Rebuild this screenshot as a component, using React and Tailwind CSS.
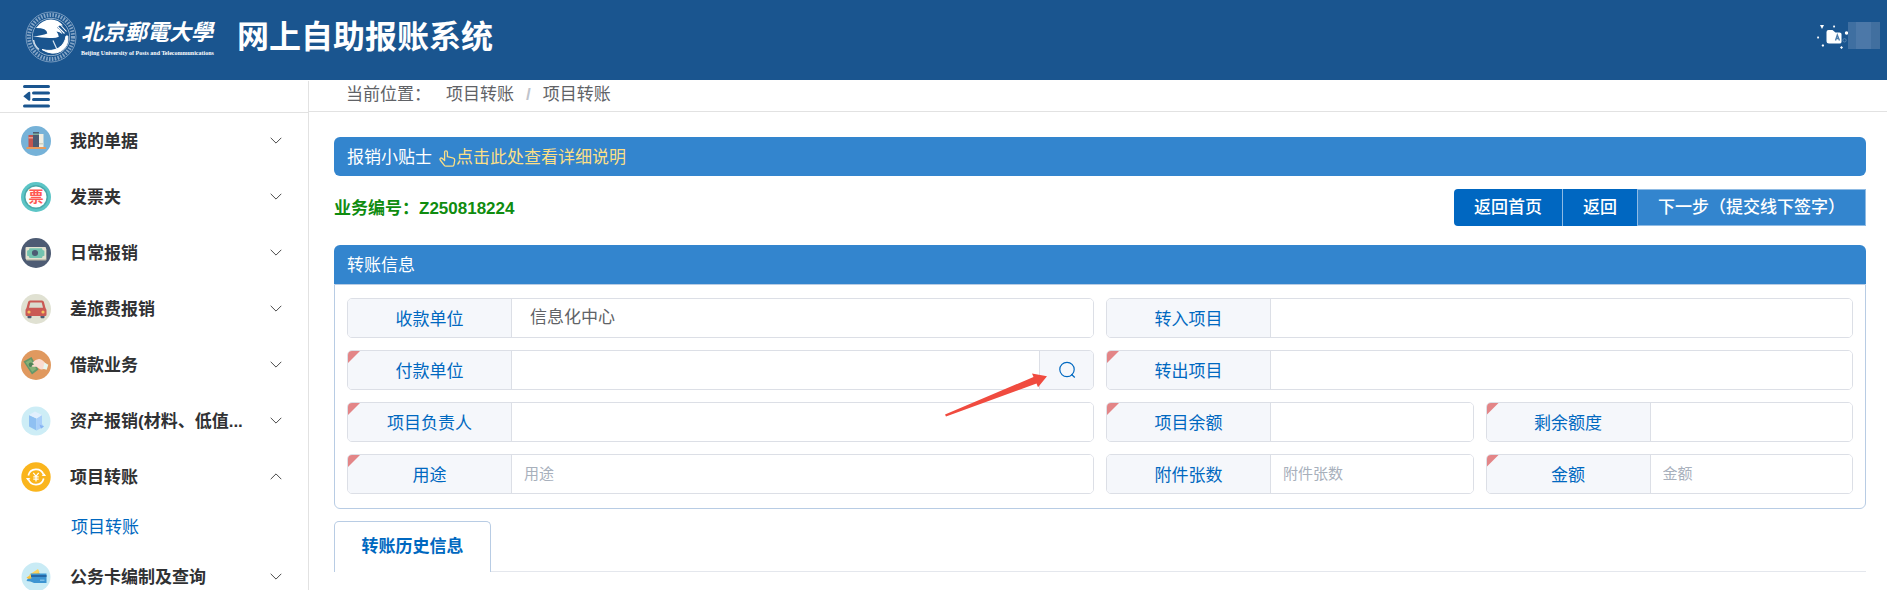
import React from "react";

const Svg = ({ children }) => (
  <svg viewBox="0 0 30 30" className="size-[30px] shrink-0" aria-hidden="true">
    {children}
  </svg>
);

const icons = {
  books: (
    <Svg>
      <circle cx="15" cy="15" r="15" fill="#76b2d8" />
      <rect x="7.5" y="9" width="5" height="12.5" fill="#c3554e" />
      <rect x="7.5" y="11" width="5" height="1.5" fill="#e9a08f" />
      <rect x="17.5" y="8" width="5" height="13.5" fill="#f0eee2" />
      <rect x="17.5" y="17" width="5" height="1.5" fill="#cfd0bf" />
      <rect x="12" y="6" width="6" height="15.5" fill="#4c5b72" />
      <rect x="12" y="7.5" width="6" height="1.5" fill="#7fae9c" />
      <rect x="5.5" y="21" width="19.5" height="2" rx="0.6" fill="#e79a5b" />
    </Svg>
  ),
  ticket: (
    <Svg>
      <circle cx="15" cy="15" r="15" fill="#5cc5c6" />
      <circle cx="15" cy="15" r="12" fill="#4aa9aa" />
      <circle cx="15" cy="15" r="10.5" fill="#fff" />
      <text x="15" y="20.3" textAnchor="middle" fontSize="15" fontWeight="700" fill="#ff5a52">
        票
      </text>
    </Svg>
  ),
  cash: (
    <Svg>
      <circle cx="15" cy="15" r="15" fill="#4d5b73" />
      <rect x="5" y="10.5" width="20.5" height="12" rx="1" fill="#b9b8a6" />
      <rect x="4.5" y="9" width="20.5" height="12.3" rx="1" fill="#e2e1cf" />
      <path d="M8.5 10.3h12.5a2.4 2.4 0 0 0 2.4 2.4v5a2.4 2.4 0 0 0-2.4 2.4H8.5a2.4 2.4 0 0 0-2.4-2.4v-5a2.4 2.4 0 0 0 2.4-2.4z" fill="#74c3af" />
      <circle cx="14" cy="15" r="3.1" fill="#4d5b73" />
    </Svg>
  ),
  car: (
    <Svg>
      <circle cx="15" cy="15" r="15" fill="#e0e1d2" />
      <rect x="6.5" y="20" width="4" height="4.3" rx="1" fill="#4d5b73" />
      <rect x="19.5" y="20" width="4" height="4.3" rx="1" fill="#4d5b73" />
      <path d="M9 6.5h12q1.5 0 1.9 1.5l1.7 6.3q.9.8.9 2.2v4.2q0 1.3-1.3 1.3H5.8q-1.3 0-1.3-1.3v-4.2q0-1.4.9-2.2L7.1 8Q7.5 6.5 9 6.5z" fill="#ca5a55" />
      <path d="M9.3 8.5h11.4l1.3 5.3H8z" fill="#d9dccf" />
      <circle cx="8" cy="18" r="1.6" fill="#f6c35f" />
      <circle cx="22" cy="18" r="1.6" fill="#f6c35f" />
    </Svg>
  ),
  loan: (
    <Svg>
      <circle cx="15" cy="15" r="15" fill="#e0995f" />
      <path d="M2.5 11.5l8-4.5 7 12.500-6.500 5z" fill="#64976a" />
      <path d="M4.7 12.2l5.200-2.900 5.300 9.600-4 3z" fill="#86b277" />
      <circle cx="9.8" cy="14.8" r="2.2" fill="#4f8058" />
      <path d="M11.5 12.5q3.500-4 7-3.500 3.300.5 6 4.500l-1.500 5.500q-3 1-5-.6l-2.500-1.700q-3 .2-5-.2.200-1.400 2.700-1.700z" fill="#fadcd0" />
      <path d="M23.5 12.5l3.800 2.300-1.600 5-3.700-1z" fill="#e9f7ee" />
    </Svg>
  ),
  box: (
    <Svg>
      <circle cx="15" cy="15" r="14.5" fill="#cdedf6" />
      <path d="M8 9l7.500 3.500v12L8 20.500z" fill="#8fc0f2" />
      <path d="M15.500 12.500L21 9v9l2 2.500-7.500 4z" fill="#a9cffa" />
      <path d="M8 9l6-3.500L21 9l-5.500 3.500z" fill="#e2effd" />
      <path d="M18.500 18.500l4.500 2-3 2.300z" fill="#86b4f2" />
    </Svg>
  ),
  transfer: (
    <Svg>
      <circle cx="15" cy="15" r="14.7" fill="#fab51d" />
      <g fill="none" stroke="#fff" strokeWidth="1.7">
        <path d="M7.300 13.500a8 8 0 0 1 15.300-.7" />
        <path d="M22.700 16.500a8 8 0 0 1-15.300.7" />
        <path d="M12.300 10.800l2.700 3.500 2.700-3.500M15 14.300v5.200M12.300 14.800h5.400M12.300 17.200h5.400" strokeWidth="1.3" />
      </g>
      <path d="M20.500 14h4.500l-1.500-2.500zM9.500 16H5l1.500 2.500z" fill="#fff" />
    </Svg>
  ),
  card: (
    <Svg>
      <circle cx="15" cy="15" r="14.5" fill="#c9ebf5" />
      <path d="M5.500 15.500l11-7 3 4-9.500 7z" fill="#f6c141" />
      <path d="M8 13l9-6 1.500 3-9 5z" fill="#fbd35f" />
      <path d="M9.500 11.500H25.500v9.500H13l-3.500-1.500-4-.5 1-2 4-.5z" fill="#3d95d2" />
      <path d="M10 13h15.500v2H10z" fill="#2567a5" />
      <path d="M19 18.200h4.500" stroke="#9ad0f0" strokeWidth="1" />
    </Svg>
  ),
};

const menu = [
  { icon: "books", label: "我的单据" },
  { icon: "ticket", label: "发票夹" },
  { icon: "cash", label: "日常报销" },
  { icon: "car", label: "差旅费报销" },
  { icon: "loan", label: "借款业务" },
  { icon: "box", label: "资产报销(材料、低值..." },
  { icon: "transfer", label: "项目转账", children: ["项目转账"] },
  { icon: "card", label: "公务卡编制及查询" },
];

const Chevron = ({ open }) => (
  <svg viewBox="0 0 12 8" className="h-2 w-3 shrink-0" fill="none" stroke="#4a4a4a" strokeWidth="1" aria-hidden="true">
    <path d={open ? "M.7 6.200L6 .9l5.300 5.300" : "M.7.800L6 6.100l5.300-5.300"} />
  </svg>
);

function Seal() {
  return (
    <svg viewBox="0 0 52 52" className="size-[52px] shrink-0" aria-hidden="true">
      <circle cx="26" cy="26" r="25" fill="none" stroke="#8dabca" strokeWidth=".8" />
      <circle cx="26" cy="26" r="22" fill="none" stroke="#84a5c7" strokeWidth="4" strokeDasharray="1.600 1.300" />
      <circle cx="26" cy="26" r="18.7" fill="#1a558f" stroke="#bdd0e3" strokeWidth=".7" />
      <path d="M11 17Q17 8.500 26 8.500q7.500 0 12 6-3.500-.8-6 2.300 3.300 1.500 5.500 6.500-3-2.500-6-2.800 2 2.500 2.300 5.200-3.300 1.700-8 1.300-8 .2-18-1.800 9-.5 14.500-2.800Q22 17 11 17z" fill="#fff" />
      <path d="M32 15l7.500 7.500M35 13.500l6.500 7" stroke="#fff" strokeWidth="1.100" />
      <path d="M42.800 25q1.200 10-6.500 15-8.800 5-19.300-1.500Q27 41 33.500 37q6.500-4 7.500-12z" fill="#fff" stroke="#fff" strokeWidth="1" />
      <path d="M28 29.500l4 9" stroke="#dce7f1" strokeWidth="1.200" />
      <path d="M8.500 29q1 6 5.500 9.500" fill="none" stroke="#d3e0ed" strokeWidth="1.500" />
    </svg>
  );
}

function Header() {
  return (
    <header className="flex h-20 items-start justify-between bg-[#1a558f] pr-[7px] pl-[25px] text-white">
      <div className="flex items-center pt-[11px]">
        <Seal />
        <div className="ml-1 w-[134px] pt-px whitespace-nowrap">
          <div className="text-[22px] leading-[30px] font-bold italic">北京郵電大學</div>
          <div className="font-['Liberation_Serif',serif] text-[6px] leading-[10px] font-bold">
            Beijing University of Posts and Telecommunications
          </div>
        </div>
        <h1 className="ml-[22px] text-[32px] leading-[52px] font-bold">网上自助报账系统</h1>
      </div>
      <div className="flex pt-[22px]">
        <svg viewBox="0 0 32 27" className="h-[27px] w-8" fill="#fff" aria-hidden="true">
          <path d="M4 3h4L6 7zM17 4.500l1-1.500 1.200 1.500L18 6zM1 15.500l1-1.500 1.200 1.500L2 17zM5.500 23.500L7 22l1.200 1.500L7 25zM24 25.500l1.500-1.500 1.500 1.500-1.500 1.500z" />
          <path d="M12.500 8h4l3 2.500h4q2 0 2 1.500v8q0 1.500-2 1.500H13q-2.500 0-2.500-2.500v-9Q10.500 8 12.500 8z" />
          <circle cx="30.5" cy="11" r="1.700" />
          <path d="M19.500 18.500l1.800-5.500 2.200 5.500M20.300 16.500h2.500" fill="none" stroke="#4b7cab" strokeWidth="1.300" />
          <circle cx="28.5" cy="18.300" r="1.700" fill="none" stroke="#5f8bb6" strokeWidth=".8" />
        </svg>
        <div className="grid h-[27px] w-8 grid-cols-[8px_15px_9px]">
          <span className="bg-[#3f6fa1]" />
          <span className="bg-[#4c78a8]" />
          <span className="bg-[#416f9f]" />
        </div>
      </div>
    </header>
  );
}

function Sidebar() {
  return (
    <aside className="mt-px w-[309px] shrink-0 border-r border-[#e2e2e2]">
      <div className="flex h-8 items-start border-b border-[#e2e2e2] pt-[3px] pl-[23px]">
        <button type="button" aria-label="收起菜单">
          <svg viewBox="0 0 27 24" className="h-6 w-[27px]" aria-hidden="true">
            <g stroke="#1a558f" strokeWidth="3" strokeLinecap="round">
              <path d="M1.500 2.500h24M10.500 9h15M10.500 15.500h15M1.500 22h24" />
            </g>
            <path d="M.3 12.200L5.500 8q1.800-.8 1.800 1v6.500q0 1.700-1.800.9z" fill="#1a558f" />
          </svg>
        </button>
      </div>
      <nav>
        {menu.map((m) => (
          <div key={m.icon}>
            <button type="button" className="flex h-14 w-full items-center pr-[26px] pl-[21px] text-left">
              {icons[m.icon]}
              <span className="ml-[19px] flex-1 pt-[2px] text-[17px] leading-6 font-bold whitespace-nowrap text-[#303133]">
                {m.label}
              </span>
              <Chevron open={!!m.children} />
            </button>
            {m.children?.map((c) => (
              <a key={c} href="#transfer" className="flex h-11 items-center pt-[2px] pl-[71px] text-[17px] leading-6 text-[#0068c0]">
                {c}
              </a>
            ))}
          </div>
        ))}
      </nav>
    </aside>
  );
}

function Field({ id, label, required, placeholder, value, wide, search }) {
  return (
    <div className={(wide ? "col-span-2" : "col-span-1") + " relative flex h-10 rounded-[5px] border border-[#dcdfe6]"}>
      {required && (
        <span className="absolute top-0 left-0 size-3 rounded-tl-[4px] bg-[#e38587] [clip-path:polygon(0_0,100%_0,0_100%)]" />
      )}
      <label
        htmlFor={id}
        className="flex w-[164px] shrink-0 items-center justify-center rounded-l-[4px] border-r border-[#dcdfe6] bg-[#f5f7fb] pt-[3px] text-[17px] leading-6 text-[#0068c0]"
      >
        {label}
      </label>
      <input
        id={id}
        type="text"
        defaultValue={value}
        placeholder={placeholder}
        className={
          (value ? "px-[18px] text-[17px]" : "px-3 text-[15px]") +
          " min-w-0 flex-1 rounded-r-[4px] bg-white text-[#606266] outline-none placeholder:text-[#a8b0bc]"
        }
      />
      {search && (
        <>
          <button
            type="button"
            aria-label="查询"
            className="flex w-[54px] shrink-0 items-center justify-center rounded-r-[4px] border-l border-[#dcdfe6] bg-[#f5f7fb]"
          >
            <svg viewBox="0 0 18 18" className="size-[18px]" fill="none" stroke="#0068c0" strokeWidth="1.200" aria-hidden="true">
              <circle cx="9" cy="8.500" r="7.200" />
              <path d="M13.300 13.300l3.500 3.200" />
            </svg>
          </button>
          <svg viewBox="0 0 104 46" className="absolute top-5 right-[45px] z-10 h-[46px] w-[104px]" fill="#f04b3f" aria-hidden="true">
            <path d="M1 43.500L89.500 6 88 2.500l15 2.700L94 16.300 92.500 12.500 2 45.500z" />
          </svg>
        </>
      )}
    </div>
  );
}

function Main() {
  return (
    <main className="min-w-0 flex-1">
      <div className="flex h-8 items-center border-b border-[#e2e2e2] pb-px pl-[37px] text-[17px] leading-6 text-[#606266]">
        <span className="w-[100px]">当前位置：</span>
        <span>项目转账</span>
        <span className="mx-3 font-bold text-[#c0c4cc]">/</span>
        <span>项目转账</span>
      </div>
      <div className="pt-[25px] pr-[21px] pl-[25px]">
        <div className="flex h-[39px] items-center gap-[7px] rounded-md bg-[#3385ce] px-[13px] pt-[3px] text-[17px] leading-6 text-white">
          <span>报销小贴士</span>
          <a href="#tips" className="flex items-center text-[#fbdf86]">
            <svg viewBox="0 0 17 17" className="size-[17px]" fill="none" stroke="#fbdf86" strokeWidth="1.300" strokeLinejoin="round" aria-hidden="true">
              <path d="M5.600 10.500V2.300q0-1.500 1.400-1.500t1.400 1.500v4.400l5.300 1.100q2.300.5 2 2.700l-.7 4.200q-.2 1.400-1.500 1.400H6.800q-.9 0-1.500-.8L1.200 10q-.7-1.200.3-1.800 1-.5 1.900.3z" />
            </svg>
            点击此处查看详细说明
          </a>
        </div>
        <div className="mt-[13px] flex h-[37px] items-center justify-between">
          <span className="pt-[3px] text-[17px] leading-6 font-bold text-[#0f8c0f]">业务编号：Z250818224</span>
          <div className="flex h-full text-[17px] leading-6 font-medium text-white">
            <button type="button" className="rounded-l-[4px] border-r border-[#8fbbe4] bg-[#0067c1] px-5">返回首页</button>
            <button type="button" className="bg-[#0067c1] px-5">返回</button>
            <button type="button" className="border border-[#8fbbe4] bg-[#3385ce] px-5">下一步（提交线下签字）</button>
          </div>
        </div>
        <section className="mt-[19px]">
          <h2 className="flex h-[39px] items-center rounded-t-md bg-[#3385ce] px-[13px] pt-[3px] text-[17px] leading-6 text-white">转账信息</h2>
          <form className="grid grid-cols-4 gap-3 rounded-b-md border border-[#b8cce4] px-3 pt-[13px] pb-[14px]">
            <Field id="payee" label="收款单位" value="信息化中心" wide />
            <Field id="in-project" label="转入项目" wide />
            <Field id="payer" label="付款单位" required wide search />
            <Field id="out-project" label="转出项目" required wide />
            <Field id="owner" label="项目负责人" required wide />
            <Field id="balance" label="项目余额" required />
            <Field id="quota" label="剩余额度" required />
            <Field id="purpose" label="用途" placeholder="用途" required wide />
            <Field id="attachments" label="附件张数" placeholder="附件张数" />
            <Field id="amount" label="金额" placeholder="金额" required />
          </form>
        </section>
        <div role="tablist" className="mt-3 flex h-[51px]">
          <button
            type="button"
            role="tab"
            aria-selected="true"
            className="w-[157px] rounded-t-[5px] border border-b-0 border-[#b8cce4] text-[17px] leading-6 font-bold text-[#0068c0]"
          >
            转账历史信息
          </button>
          <div className="flex-1 border-b border-[#e4e7ed]" />
        </div>
      </div>
    </main>
  );
}

export default function App() {
  return (
    <div
      lang="zh-CN"
      className="h-screen overflow-hidden bg-white font-['Liberation_Sans','Noto_Sans_CJK_SC',sans-serif]"
    >
      <Header />
      <div className="flex min-h-full">
        <Sidebar />
        <Main />
      </div>
    </div>
  );
}
